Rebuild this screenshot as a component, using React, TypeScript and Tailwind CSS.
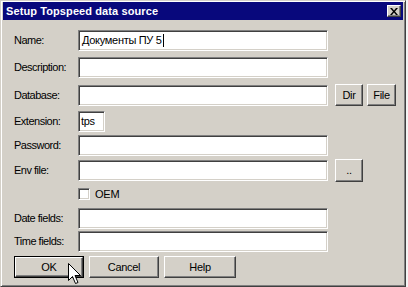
import React from "react";

const sunken =
  "h-[21px] bg-white border border-t-[#808080] border-l-[#808080] border-b-white border-r-white shadow-[inset_1px_1px_0_#404040,inset_-1px_-1px_0_#d4d0c8]";
const raised =
  "flex items-center justify-center bg-[#d4d0c8] border border-t-white border-l-white border-b-[#404040] border-r-[#404040] shadow-[inset_-1px_-1px_0_#808080] text-[11px] tracking-[-0.3px] text-black";

function Label({ children }: { children: React.ReactNode }) {
  return <div className="w-[64px] text-[11px] tracking-[-0.5px] text-black">{children}</div>;
}

function Row({
  label,
  mt,
  children,
}: {
  label: string;
  mt: string;
  children?: React.ReactNode;
}) {
  return (
    <div className={`flex items-center ${mt}`}>
      <Label>{label}</Label>
      {children ?? <div className={`${sunken} w-[250px]`} />}
    </div>
  );
}

export default function App() {
  return (
    <div className="w-[408px] h-[287px] overflow-hidden bg-[#f4f4f4] font-['Liberation_Sans',Arial,sans-serif]">
      <div className="w-[406px] h-[287px] bg-[#d4d0c8] border border-t-[#d4d0c8] border-l-[#d4d0c8] border-b-[#404040] border-r-[#404040] shadow-[inset_1px_1px_0_#fff,inset_-1px_-1px_0_#808080] pt-[1px] px-[2px] pb-[2px] flex flex-col">
        {/* Title bar */}
        <div className="h-[18px] bg-[#08087c] flex items-center justify-between pl-[3px] pr-[2px]">
          <span className="text-white font-bold text-[11px] tracking-[0.1px]">Setup Topspeed data source</span>
          <div className="w-[14px] h-[12px] bg-[#d4d0c8] border border-t-white border-l-white border-b-[#404040] border-r-[#404040] shadow-[inset_-1px_-1px_0_#808080] flex items-center justify-center">
            <svg width="8" height="7" viewBox="0 0 8 7">
              <path d="M0 0h2l2 2.5L6 0h2L5 3.5 8 7H6L4 4.5 2 7H0l3-3.5z" fill="#000" />
            </svg>
          </div>
        </div>

        {/* Body */}
        <div className="relative flex-1 pl-[11px]">
          <Row label="Name:" mt="mt-[10px]">
            <div className={`${sunken} w-[250px] flex items-center pl-[3px] text-[11px] tracking-[-0.3px] text-black`}>
              Документы ПУ 5<span className="w-[1px] h-[13px] bg-black ml-[1px]" />
            </div>
          </Row>
          <Row label="Description:" mt="mt-[6px]" />
          <div className="flex items-center mt-[6px]">
            <Label>Database:</Label>
            <div className={`${sunken} w-[250px]`} />
            <div className="flex gap-[4px] ml-[7px]">
              <div className={`${raised} w-[28px] h-[22px]`}>Dir</div>
              <div className={`${raised} w-[29px] h-[22px]`}>File</div>
            </div>
          </div>
          <Row label="Extension:" mt="mt-[5px]">
            <div className={`${sunken} w-[27px] flex items-center pl-[2px] text-[11px] tracking-[-0.3px] text-black`}>tps</div>
          </Row>
          <Row label="Password:" mt="mt-[3px]" />
          <div className="flex items-start mt-[4px]">
            <div className="h-[21px] flex items-center">
              <Label>Env file:</Label>
            </div>
            <div className={`${sunken} w-[250px]`} />
            <div className={`${raised} w-[28px] h-[23px] ml-[7px] -mt-[1px]`}>..</div>
          </div>
          <div className="flex items-center mt-[6px] ml-[64px] h-[12px]">
            <div className="w-[12px] h-[12px] bg-white border border-t-[#808080] border-l-[#808080] border-b-white border-r-white shadow-[inset_1px_1px_0_#404040,inset_-1px_-1px_0_#d4d0c8]" />
            <span className="ml-[5px] text-[11px] tracking-[-0.2px] text-black">OEM</span>
          </div>
          <Row label="Date fields:" mt="mt-[8px]" />
          <Row label="Time fields:" mt="mt-[2px]" />

          {/* Buttons */}
          <div className="flex gap-[5px] mt-[4px]">
            <div className="w-[70px] h-[22px] border border-black">
              <div className={`${raised} w-full h-full`}>OK</div>
            </div>
            <div className={`${raised} w-[70px] h-[22px]`}>Cancel</div>
            <div className={`${raised} w-[72px] h-[22px]`}>Help</div>
          </div>

          {/* Mouse cursor */}
          <svg
            className="absolute left-[65px] top-[243px]"
            width="13"
            height="22"
            viewBox="0 0 13 22"
          >
            <path
              d="M0.5 0.5V17.5L4.5 13.5L7.5 20.5L10 19.5L7 12.5H12.5Z"
              fill="#fff"
              stroke="#000"
              strokeWidth="1"
              strokeLinejoin="miter"
            />
          </svg>
        </div>
      </div>
    </div>
  );
}
